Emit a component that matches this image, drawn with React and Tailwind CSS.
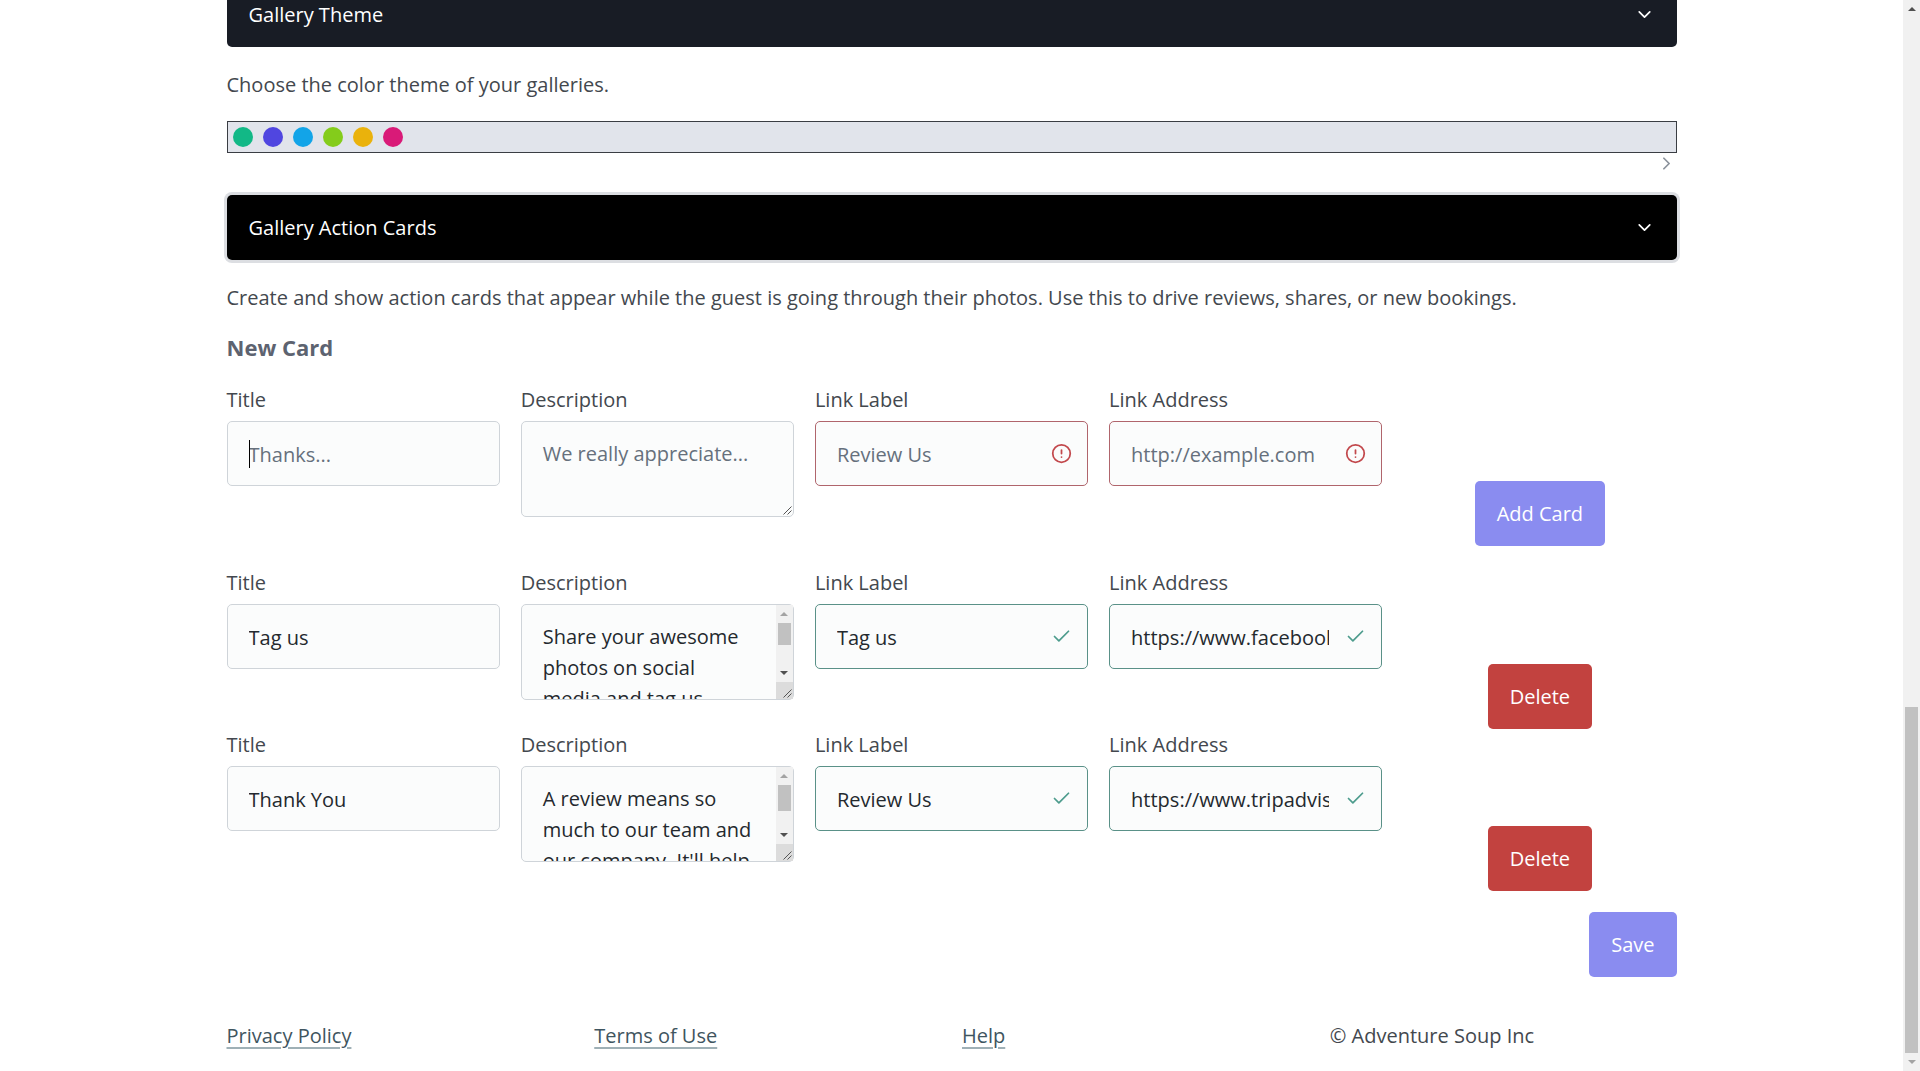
import { useState } from 'react';
import { AlertCircle, Check, ChevronDown, ChevronRight } from 'lucide-react';
import clsx from 'clsx';

const themes = [
  { name: 'Emerald', color: 'bg-[#12b886]' },
  { name: 'Indigo', color: 'bg-[#5046e0]' },
  { name: 'Sky', color: 'bg-[#12a4e8]' },
  { name: 'Lime', color: 'bg-[#84cc1b]' },
  { name: 'Yellow', color: 'bg-[#eab20c]' },
  { name: 'Pink', color: 'bg-[#d91a78]' },
];

const savedCards = [
  {
    id: 'card-1',
    title: 'Tag us',
    description: 'Share your awesome photos on social media and tag us',
    label: 'Tag us',
    address: 'https://www.facebook.com',
    thumb: 'h-[22px]',
  },
  {
    id: 'card-2',
    title: 'Thank You',
    description: "A review means so much to our team and our company. It'll help",
    label: 'Review Us',
    address: 'https://www.tripadvisor.com',
    thumb: 'h-[26px]',
  },
];

const Arrow = ({ down, className }) => (
  <svg viewBox="0 0 8 4" className={clsx('h-1 w-2', className)} aria-hidden="true">
    <path d={down ? 'M0 0h8L4 4z' : 'M0 4h8L4 0z'} fill="currentColor" />
  </svg>
);

const SectionBar = ({ children, active }) => (
  <button
    type="button"
    className={clsx(
      'flex w-full items-center justify-between rounded-[5px] px-[22px] py-4 text-left leading-[33px] text-white',
      active ? 'bg-black ring-3 ring-[#dcdee2]' : 'bg-[#181c25]'
    )}
  >
    {children}
    <ChevronDown size={21} />
  </button>
);

const controlClass =
  'block w-full rounded-[5px] border bg-[#fbfcfc] px-[21px] leading-[31px] text-[#24292e] placeholder:text-[#66707c] placeholder:opacity-100 outline-none';

// Text input with an optional validation state
const TextField = ({ id, label, status, caret, ...props }) => (
  <div>
    <label htmlFor={id} className="block leading-8">{label}</label>
    <div className="relative mt-[5px]">
      <input
        id={id}
        className={clsx(
          controlClass,
          'h-[65px] pb-3.5 pt-4',
          !status && 'border-[#cfd4d9]',
          status && 'pr-[52px]',
          status === 'invalid' && 'border-[#b0656c]',
          status === 'valid' && 'border-[#5a9188]'
        )}
        {...props}
      />
      {caret && <span className="absolute left-[22px] top-[19px] h-7 w-px bg-black" />}
      {status === 'invalid' && (
        <AlertCircle size={21} className="absolute right-4 top-[22px] text-[#c2484c]" />
      )}
      {status === 'valid' && (
        <Check size={21} className="absolute right-4 top-[22px] text-[#4d9c8d]" />
      )}
    </div>
  </div>
);

const TextArea = ({ id, label, thumb, ...props }) => (
  <div>
    <label htmlFor={id} className="block leading-8">{label}</label>
    <div className="relative mt-[5px]">
      <textarea
        id={id}
        className={clsx(
          controlClass,
          'h-24 resize-none overflow-hidden border-[#cfd4d9] py-4',
          thumb && 'pr-[38px]'
        )}
        {...props}
      />
      {thumb && (
        <div className="absolute inset-y-px right-px flex w-[17px] flex-col items-center bg-[#f1f1f1]">
          <Arrow className="my-[7px] text-[#a3a3a3]" />
          <div className={clsx('w-[13px] bg-[#c1c1c1]', thumb)} />
          <Arrow down className="mb-[7px] mt-auto text-[#505050]" />
          <div className="h-[17px] w-full bg-[#dcdcdc]" />
        </div>
      )}
      <svg viewBox="0 0 9 9" className="absolute bottom-0.5 right-0.5 size-[9px]" aria-hidden="true">
        <path d="M0.5 8.5l8-8M4.5 8.5l4-4" stroke="#555" fill="none" />
      </svg>
    </div>
  </div>
);

const Button = ({ children, className, onClick }) => (
  <button
    type="button"
    onClick={onClick}
    className={clsx('rounded-[5px] px-[22px] py-4 leading-[33px] text-white', className)}
  >
    {children}
  </button>
);

const CardRow = ({ children }) => (
  <div className="grid min-h-[162px] grid-cols-5 gap-[21px]">{children}</div>
);

const SavedCard = ({ card, onDelete }) => (
  <CardRow>
    <TextField id={`${card.id}-title`} label="Title" defaultValue={card.title} />
    <TextArea id={`${card.id}-description`} label="Description" defaultValue={card.description} thumb={card.thumb} />
    <TextField id={`${card.id}-label`} label="Link Label" defaultValue={card.label} status="valid" />
    <TextField id={`${card.id}-address`} label="Link Address" defaultValue={card.address} status="valid" />
    <div className="flex items-end justify-center">
      <Button className="bg-[#c2423f]" onClick={() => onDelete(card.id)}>Delete</Button>
    </div>
  </CardRow>
);

const App = () => {
  const [cards, setCards] = useState(savedCards);

  const handleDelete = (id) => {
    setCards(cards.filter((card) => card.id !== id));
  };

  return (
    <div className="flex min-h-screen bg-white font-['Open_Sans','Noto_Sans',sans-serif] text-[20px] text-[#43484e]">
      <div className="min-w-0 flex-1 overflow-hidden">
        <div className="mx-auto -mt-[18px] max-w-[1450px]">
          <main>
            {/* Gallery theme */}
            <SectionBar>Gallery Theme</SectionBar>
            <p className="mb-5 mt-[22px] leading-8">Choose the color theme of your galleries.</p>
            <div className="flex h-8 items-center gap-2.5 border border-[#3a3d43] bg-[#e1e4eb] px-[5px]">
              {themes.map((theme) => (
                <button
                  key={theme.name}
                  type="button"
                  aria-label={theme.name}
                  className={clsx('size-5 rounded-full', theme.color)}
                />
              ))}
            </div>
            <div className="mb-[21px] flex justify-end text-[#8b929c]">
              <ChevronRight size={21} />
            </div>

            {/* Action cards */}
            <SectionBar active>Gallery Action Cards</SectionBar>
            <p className="mb-5 mt-[22px] leading-8">
              Create and show action cards that appear while the guest is going through their photos. Use this to drive reviews, shares, or new bookings.
            </p>
            <h2 className="mb-6 text-[22px] font-bold leading-[26px] text-[#5d6370]">New Card</h2>

            <div className="mb-[21px]">
              <CardRow>
                <TextField id="new-title" label="Title" placeholder="Thanks..." caret />
                <TextArea id="new-description" label="Description" placeholder="We really appreciate..." />
                <TextField id="new-label" label="Link Label" placeholder="Review Us" status="invalid" />
                <TextField id="new-address" label="Link Address" placeholder="http://example.com" status="invalid" />
                <div className="flex items-end justify-center">
                  <Button className="bg-[#8a8cf0]">Add Card</Button>
                </div>
              </CardRow>
            </div>

            {cards.map((card) => (
              <SavedCard key={card.id} card={card} onDelete={handleDelete} />
            ))}

            <div className="mt-[21px] flex justify-end">
              <Button className="bg-[#8a8cf0]">Save</Button>
            </div>
          </main>

          <footer className="mt-[43px] grid grid-cols-4 gap-[21px] leading-8">
            {['Privacy Policy', 'Terms of Use', 'Help'].map((text) => (
              <div key={text}>
                <a href="#" className="text-[#3f5560] underline decoration-[#9fb0b6] decoration-2 underline-offset-4">
                  {text}
                </a>
              </div>
            ))}
            <div>© Adventure Soup Inc</div>
          </footer>
        </div>
      </div>

      {/* Page scrollbar */}
      <div className="sticky top-0 flex h-screen w-[17px] flex-col items-center bg-[#f1f1f1]" aria-hidden="true">
        <Arrow className="my-[7px] text-[#505050]" />
        <div className="flex-[690]" />
        <div className="w-[13px] flex-[346] bg-[#c1c1c1]" />
        <Arrow down className="my-[7px] text-[#a3a3a3]" />
      </div>
    </div>
  );
};

export default App;
